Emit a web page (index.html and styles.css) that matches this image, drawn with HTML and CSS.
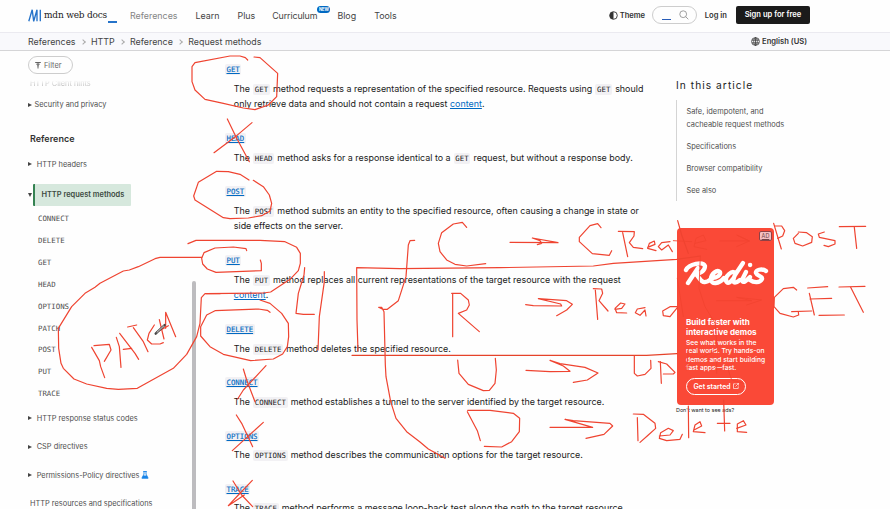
FILE: index.html
```html
<!DOCTYPE html>
<html lang="en-US">
<head>
<meta charset="utf-8">
<title>HTTP request methods | MDN</title>
<link rel="stylesheet" href="styles.css">
</head>
<body>
<header class="top">
  <a class="logo"><svg width="14" height="13" viewBox="0 0 14 13"><path d="M.8 12.3 4.2.8M4.2.8l1.5 11.5M5.7 12.3 9 .8M9 .8v11.5M12.3.8v11.5" fill="none" stroke="#2573c9" stroke-width="1.35"/></svg><span class="word">mdn web docs</span><i class="under"></i></a>
  <nav class="menu"><a class="muted">References</a><a>Learn</a><a>Plus</a><a class="cur">Curriculum<sup>NEW</sup></a><a>Blog</a><a>Tools</a></nav>
  <div class="tools">
    <span class="theme"><svg width="9" height="9" viewBox="0 0 9 9"><circle cx="4.5" cy="4.5" r="3.8" fill="none" stroke="#333" stroke-width=".9"/><path d="M4.5.7a3.8 3.8 0 0 0 0 7.6z" fill="#333"/></svg>Theme</span>
    <span class="search"><i></i><svg width="10" height="10" viewBox="0 0 10 10" fill="none" stroke="#888" stroke-width=".8"><circle cx="4.2" cy="4.2" r="3.4"/><path d="m6.7 6.7 2.6 2.6"/></svg></span>
    <a class="login">Log in</a><a class="signup">Sign up for free</a>
  </div>
</header>
<div class="crumbs">
  <ol><li>References</li><li>HTTP</li><li>Reference</li><li>Request methods</li></ol>
  <span class="lang"><svg width="9" height="9" viewBox="0 0 9 9" fill="none" stroke="#333" stroke-width=".75"><circle cx="4.5" cy="4.5" r="3.9"/><ellipse cx="4.5" cy="4.5" rx="1.8" ry="3.9"/><path d="M.8 3.1h7.4M.8 5.9h7.4M4.5.6v7.8"/></svg>English (US)</span>
</div>
<div class="layout">
  <aside class="side">
    <div class="filter"><svg width="6" height="7" viewBox="0 0 6 7"><path d="M.2.5h5.6M1.3 2.2h3.4M2.3 3.8h1.4M3 .5v6" stroke="#666" fill="none"/></svg>Filter</div>
    <div class="row hints"><span>HTTP Client hints</span></div>
    <div class="row security"><i class="tri"></i>Security and privacy</div>
    <h2>Reference</h2>
    <div class="row fold"><i class="tri"></i>HTTP headers</div>
    <div class="row open"><i class="tri down"></i><b>HTTP request methods</b></div>
    <ul><li>CONNECT</li><li>DELETE</li><li>GET</li><li>HEAD</li><li>OPTIONS</li><li>PATCH</li><li>POST</li><li>PUT</li><li>TRACE</li></ul>
    <div class="row fold"><i class="tri"></i>HTTP response status codes</div>
    <div class="row fold"><i class="tri"></i>CSP directives</div>
    <div class="row fold"><i class="tri"></i>Permissions-Policy directives<svg class="flask" width="8" height="8" viewBox="0 0 8 8"><path d="M2.2.5h3.6M3 .5v2.6L.9 7.2h6.2L5 3.1V.5" fill="none" stroke="#1683e8" stroke-width=".9"/><path d="M2.3 4.6h3.4l1.4 2.6H.9z" fill="#1683e8"/></svg></div>
    <div class="row plain">HTTP resources and specifications</div>
  </aside>
  <div class="scroll"><i></i></div>
  <main>
    <dl>
      <dt><code>GET</code></dt><dd>The <code>GET</code> method requests a representation of the specified resource. Requests using <code>GET</code> should<br>only retrieve data and should not contain a request <a>content</a>.</dd>
      <dt><code>HEAD</code></dt><dd>The <code>HEAD</code> method asks for a response identical to a <code>GET</code> request, but without a response body.</dd>
      <dt><code>POST</code></dt><dd>The <code>POST</code> method submits an entity to the specified resource, often causing a change in state or<br>side effects on the server.</dd>
      <dt><code>PUT</code></dt><dd>The <code>PUT</code> method replaces all current representations of the target resource with the request<br><a>content</a>.</dd>
      <dt><code>DELETE</code></dt><dd>The <code>DELETE</code> method deletes the specified resource.</dd>
      <dt><code>CONNECT</code></dt><dd>The <code>CONNECT</code> method establishes a tunnel to the server identified by the target resource.</dd>
      <dt><code>OPTIONS</code></dt><dd>The <code>OPTIONS</code> method describes the communication options for the target resource.</dd>
      <dt><code>TRACE</code></dt><dd>The <code>TRACE</code> method performs a message loop-back test along the path to the target resource.</dd>
    </dl>
  </main>
  <aside class="toc">
    <h3>In this article</h3>
    <ul><li>Safe, idempotent, and<br>cacheable request methods</li><li>Specifications</li><li>Browser compatibility</li><li>See also</li></ul>
    <div class="ad">
      <span class="tag">AD</span>
      <svg class="redis" width="86" height="28" viewBox="0 0 86 28" fill="none" stroke="#fff" stroke-width="4.3" stroke-linecap="round" stroke-linejoin="round"><path d="M15 8 5 23M3 10C6 4 20 1 22 6c0 5-5 8-10 8 4 1 5 9 10 8 3 0 5-2 7-4"/><path d="M29 18c5 0 9-3 8-6-3-3-9 2-9 7 0 6 8 5 13-1"/><path d="M52 13c-3-3-10 3-9 8 2 5 8-2 9-6l8-12M52 15c-4 9 0 9 5 5"/><path d="m63 12-4 8c1 4 4 1 8-3M83 11c-4-3-11-1-10 2 1 3 7 3 6 6-2 4-8 4-12 1"/><path d="M67 5h.2"/></svg>
      <h4>Build faster with<br>interactive demos</h4>
      <p>See what works in the<br>real world. Try hands-on<br>demos and start building<br>fast apps—fast.</p>
      <a class="start">Get started <svg width="6" height="6" viewBox="0 0 6 6" fill="none" stroke="#fff" stroke-width=".65"><path d="M2.7.8H.5v4.7h4.7V3.3M3.5.4h2.1v2.1M5.6.4 2.5 3.5"/></svg></a>
    </div>
    <div class="noads">Don't want to see ads?</div>
  </aside>
</div>
<svg class="ink" width="890" height="509" viewBox="0 0 890 509">
  <g transform="translate(180 50) scale(.33333)">
    <polyline points="203,30 196,23 180,18 150,18 45,38 36,50 36,95 45,120 75,148 130,160 190,174 225,179 265,165 290,140 293,70 240,23 222,21"/>
    <polyline points="142,207 170,265 208,335"/><polyline points="216,218 170,257 102,308"/>
    <polyline points="207,390 180,373 145,365 110,364 55,397 41,438 45,450 130,503 150,506 205,504 245,497 270,483 275,460 268,435 250,410 220,391"/>
  </g>
  <g transform="translate(0 225) scale(.33333)">
    <polyline points="605,97 480,97 465,101 415,125 388,135 370,138 300,175 285,187 255,205 215,245 175,310 176,370 183,415 190,430 222,462 260,477 320,490 355,493 412,490 420,485 520,430 560,388 590,335 600,295 604,218 615,206 660,206"/>
    <polyline points="275,367 298,407 302,425 314,458"/><polyline points="282,362 328,358 333,375 313,409"/>
    <polyline points="349,337 358,365 363,427"/><polyline points="359,325 405,385 416,403"/><polyline points="370,373 395,370"/>
    <polyline points="383,306 410,300"/><polyline points="400,308 430,350 444,380"/>
    <polyline points="463,300 447,325 442,345 455,357 480,357 490,353"/><polyline points="478,284 492,342"/><polyline points="470,322 505,302"/><polyline points="497,310 497,262 527,335"/>
    <polyline class="pen" points="467,326 494,300"/><polyline class="nib" points="471,322 491,303"/>
  </g>
  <g transform="translate(180 220) scale(.33333)">
    <polyline points="78,221 250,219 272,216 330,178 355,152 361,130 361,100 350,82 315,65 240,61 48,61 24,71"/>
    <polyline points="200,92 198,86 160,81 105,84 72,98 65,115 68,132 82,147 108,157 244,152 244,130 241,120"/>
    <polyline points="270,277 262,271 235,267 105,272 80,285 62,320 62,348 90,380 130,403 212,422 280,417 308,402 322,380 326,350 325,310 305,280 270,250 240,240"/>
    <polyline points="374,143 372,165 355,220 348,280 370,283 403,283"/><polyline points="433,155 433,185 418,290 414,390"/>
    <polyline points="534,393 531,300 530,143 660,146 960,143 1240,138 1300,130 1490,118 1561,108"/>
    <polyline class="olive" points="516,406 1400,406 1491,401"/>
    <polyline points="704,61 690,62 685,75 678,170 655,242 622,268 608,268 596,262 605,262 612,275 616,435 618,470 632,545 648,595 680,635 720,666 745,687 795,715"/>
  </g>
  <g transform="translate(180 360) scale(.33333)">
    <polyline points="258,17 190,90 173,117"/><polyline points="190,27 200,60 225,125"/>
    <polyline points="169,165 185,190 218,260"/><polyline points="250,187 157,272"/>
    <polyline points="159,363 185,405 218,440"/><polyline points="217,361 175,405 145,437 193,405"/>
  </g>
  <g transform="translate(400 210) scale(.33333)">
    <polyline points="200,52 187,37 160,42 125,68 115,100 120,125 140,150 165,163 200,168 257,161"/>
    <polyline points="330,97 474,98 397,84 420,92 425,100 412,104"/>
    <polyline points="603,53 593,41 570,47 538,82 538,95 577,131 628,136 635,122"/>
    <polyline points="668,68 683,140"/><polyline points="655,64 703,65 702,78 688,98 700,112 728,116"/>
    <polyline points="158,252 158,380"/><polyline points="155,250 182,250 205,270 208,285 200,300 175,310 238,365"/>
    <polyline points="377,284 400,287 485,288 482,282 415,266 500,272 517,283 500,300 470,317"/>
    <polyline points="586,240 593,328"/><polyline points="580,236 605,237 608,250 597,272 624,303"/>
    <polyline points="645,298 665,295 675,282 662,279 645,295 650,308 680,309"/><polyline points="735,293 712,297 706,308 720,316 735,300 738,318"/>
  </g>
  <g transform="translate(400 350) scale(.33333)">
    <polyline points="173,30 177,70 205,103 250,122 268,121 285,100 289,60 286,25"/>
    <polyline points="378,61 450,65 510,64 490,48 450,31 480,41 555,52 594,69 562,90 520,97"/>
    <polyline points="202,185 232,242 241,272"/><polyline points="203,181 270,181 340,190 359,205 358,245 335,275 305,291 253,289"/>
    <polyline points="450,232 578,232 495,208 520,212 630,220 638,228 612,253 558,265"/>
  </g>
  <g transform="translate(620 210) scale(.33333)">
    <polyline points="83,112 105,103 103,93 88,100 83,115 108,122"/><polyline points="150,95 125,98 115,110 125,120 145,105 157,125"/>
    <polyline points="173,32 185,75 205,130"/><polyline class="faint" points="160,92 215,95"/>
    <polyline class="faint" points="225,100 258,92 250,75 228,85 222,110 260,118"/><polyline class="faint" points="300,93 388,93 350,75 388,93 350,110"/>
    <polyline class="faint" points="241,138 237,235 255,290 285,340 292,420 240,445"/><polyline class="faint" points="290,272 395,272 350,262 425,270 380,285"/>
    <polyline points="461,40 484,117"/><polyline points="465,48 485,48 494,62 488,78 473,85"/>
    <polyline points="535,70 520,85 525,100 548,108 575,97 577,80 560,68 535,66"/><polyline points="613,66 595,72 598,82 645,92 645,102 625,110 612,106"/>
    <polyline points="658,50 737,49"/><polyline points="703,52 710,115"/>
    <polyline points="530,240 520,232 490,236 463,262 462,290 480,310 520,321 536,315 535,306"/><polyline points="515,305 575,303"/>
    <polyline points="568,250 583,315"/><polyline points="563,234 623,230"/><polyline points="570,267 635,265"/><polyline points="597,316 673,315"/>
    <polyline points="657,231 735,229"/><polyline points="692,232 730,307"/>
    <polyline points="172,290 150,290 128,303 130,317 150,320 172,293"/><polyline class="faint" points="172,205 190,320"/>
    <polyline points="43,438 43,490 52,498 75,493 93,475 92,451"/><polyline points="121,455 124,520"/><polyline points="115,455 140,462 165,487 160,492 130,492"/>
    <polyline class="faint" points="205,415 200,480"/><polyline class="faint" points="290,455 290,490"/><polyline class="faint" points="325,480 335,510 370,520"/>
    <polyline points="52,623 54,692"/><polyline points="40,612 70,613 105,640 107,655 85,675 60,697"/>
    <polyline points="118,678 150,675 160,662 145,655 122,668 118,685 140,692 180,688 187,673"/><polyline points="205,588 206,683"/>
    <polyline points="222,660 245,648 240,635 225,645 220,665 255,668"/><polyline points="311,570 314,663"/><polyline points="292,640 330,640"/><polyline points="350,655 378,645 370,632 352,642 352,665 380,667"/>
  </g>
</svg>
</body>
</html>
```
FILE: styles.css
```css
* { box-sizing: border-box; }
body { margin: 0; width: 890px; height: 509px; overflow: hidden; position: relative; background: #fefefe; color: #1b1b1b; font-family: Inter, "Liberation Sans", sans-serif; font-size: 8.9px; }
ul, ol, dl, dd, h2, h3, h4, p { margin: 0; padding: 0; list-style: none; }
svg { display: block; flex: none; }

.top { height: 32px; padding: 0 80px 2px 28px; display: flex; align-items: center; }
.logo { display: flex; align-items: center; width: 102px; }
.word { width: 64px; flex: none; margin-left: 2px; font: 10px/12px "DejaVu Serif Condensed", "DejaVu Serif", serif; letter-spacing: -.2px; white-space: nowrap; }
.under { width: 9px; height: 1.5px; background: #2573c9; margin: 14px 0 0 0; flex: none; }
.menu { display: flex; gap: 18px; color: #444; }
.menu a { display: flex; }
.menu .muted { color: #858585; }
.menu .cur { letter-spacing: -.12px; margin-left: -1px; margin-right: 2px; }
sup { align-self: flex-start; margin: -4px -13px 0 0; width: 13px; height: 7px; border-radius: 4px; background: #0069c2; color: #fff; font-size: 4.3px; line-height: 7px; font-weight: 700; text-align: center; }
.tools { margin-left: auto; display: flex; align-items: center; font-size: 7.6px; font-weight: 600; color: #333; }
.theme { display: flex; gap: 2px; align-items: center; letter-spacing: -.1px; }
.search { width: 45px; height: 18px; margin: 0 8px 0 7px; border: 1px solid #cdcdcd; border-radius: 9px; display: flex; align-items: center; padding-left: 9px; gap: 8px; }
.search i { width: 9px; height: 1px; background: #285db8; margin-top: 9px; }
.signup { width: 74px; height: 18px; line-height: 18px; margin-left: 9px; border-radius: 2px; background: #1b1b1b; color: #fff; text-align: center; }

.crumbs { height: 19px; border-top: 1px solid #ebeaf0; border-bottom: 1px solid #d5d5d7; background: #f9f9fc; display: flex; justify-content: space-between; align-items: center; padding: 0 83px 0 28px; color: #444; }
.crumbs ol { display: flex; }
.crumbs li + li::before { content: ""; display: inline-block; width: 3px; height: 3px; border: solid #aaa; border-width: .8px .8px 0 0; transform: rotate(45deg); margin: 0 6px 1px 5.4px; }
.lang { display: flex; gap: 2px; align-items: center; font-size: 7.6px; font-weight: 600; color: #333; }

.layout { display: grid; grid-template-columns: 192px 4px 480px 214px; height: 458px; }
.side { padding: 5px 0 0 28px; font-size: 7.4px; color: #4e4e4e; white-space: nowrap; }
.filter { width: 45px; height: 18px; border: 1px solid #cdcdcd; border-radius: 9px; display: flex; align-items: center; gap: 3px; padding-left: 6px; color: #696969; }
.row { display: flex; align-items: center; height: 28.5px; }
.hints { height: 18px; padding-left: 2px; }
.hints span { color: transparent; background: linear-gradient(#fefefe 15%, #a8a8a8 85%); background-clip: text; -webkit-background-clip: text; }
.security { height: 25.2px; }
.security .tri { margin-right: 2.5px; }
.tri { border-left: 4px solid #444; border-top: 2.5px solid transparent; border-bottom: 2.5px solid transparent; margin-right: 4.7px; }
.tri.down { border: 2.5px solid transparent; border-top: 4px solid #444; border-bottom: 0; margin-right: 1px; }
.side h2 { margin-top: 10.8px; padding-left: 2px; height: 22px; line-height: 22px; font-size: 9px; font-weight: 600; color: #333; }
.open { height: 26px; margin-top: 3.6px; }
.open b { height: 21.5px; line-height: 21.5px; width: 97.5px; border-left: 2px solid #348252; border-radius: 1px; background: #d6e8dd; font-weight: 600; font-size: 7.45px; color: #3c4a41; padding-left: 6.4px; }
.side li { height: 21.9px; line-height: 21.9px; padding-left: 10px; font-family: "DejaVu Sans Mono", monospace; font-size: 7.37px; }
.side ul { margin-bottom: -1.2px; }
.flask { margin-left: 2px; }
.plain { padding-left: 2px; }
.scroll { padding-top: 230px; }
.scroll i { display: block; height: 230px; border-radius: 2px 2px 0 0; background: #bdbcbf; }

main { padding: 10.2px 0 0 30px; white-space: nowrap; line-height: 15.55px; overflow: hidden; }
dt, dd { font-size: 8.91px; }
dt { height: 15.55px; margin-bottom: 4px; }
dd { margin: 0 0 18.2px 7.8px; }
code { font: 7.37px/1 "DejaVu Sans Mono", monospace; background: #f2f1f4; border-radius: 2px; padding: 1px 1.8px; }
dd code { margin: 0 .5px; }
dt code { color: #0069c2; text-decoration: underline; padding: 1px 1.5px; margin-left: -1px; -webkit-text-stroke: .12px #0069c2; }
dd a { color: #0069c2; text-decoration: underline; }

.toc { font-size: 7.45px; white-space: nowrap; }
.toc h3 { margin-top: 26px; height: 16px; line-height: 16px; font-size: 10.2px; font-weight: 400; letter-spacing: 1.05px; }
.toc ul { margin-top: 7px; height: 101px; border-left: 1px solid #d4d4d4; padding: 5px 0 0 9.4px; color: #4e4e4e; line-height: 13px; }
.toc li + li { margin-top: 9px; }
.ad { position: relative; width: 97px; height: 177px; margin: 27px 0 0 1px; border-radius: 4px; background: #fa4937; color: #fff; padding: 32px 0 0 6px; }
.tag { position: absolute; top: 3px; right: 2px; width: 13px; height: 10px; border: 1px solid #8e4145; border-radius: 2px; background: #f4bfc1; color: #704449; font-size: 5.5px; line-height: 8px; text-align: center; text-decoration: underline; }
.ad h4 { margin: 28.5px 0 0 3px; font-size: 8.05px; font-weight: 700; line-height: 10px; }
.ad p { margin: 2px 0 0 3px; font-size: 6.7px; line-height: 8.5px; font-weight: 500; }
.start { margin: 5px 0 0 3px; width: 60px; height: 17px; border: 1px solid #fff; border-radius: 9px; display: flex; align-items: center; justify-content: center; gap: 2px; font-size: 6.9px; font-weight: 600; }
.noads { font-size: 5.4px; line-height: 10px; }

.ink { position: absolute; left: 0; top: 0; fill: none; stroke: #ef4431; stroke-width: 3.6; stroke-linejoin: round; stroke-linecap: round; pointer-events: none; }
.olive { stroke: #e5432a; }
.faint { stroke: #f2432f; stroke-width: 2.6; }
.pen { stroke: #444; stroke-width: 7; }
.nib { stroke: #ddd; stroke-width: 3; }
```
